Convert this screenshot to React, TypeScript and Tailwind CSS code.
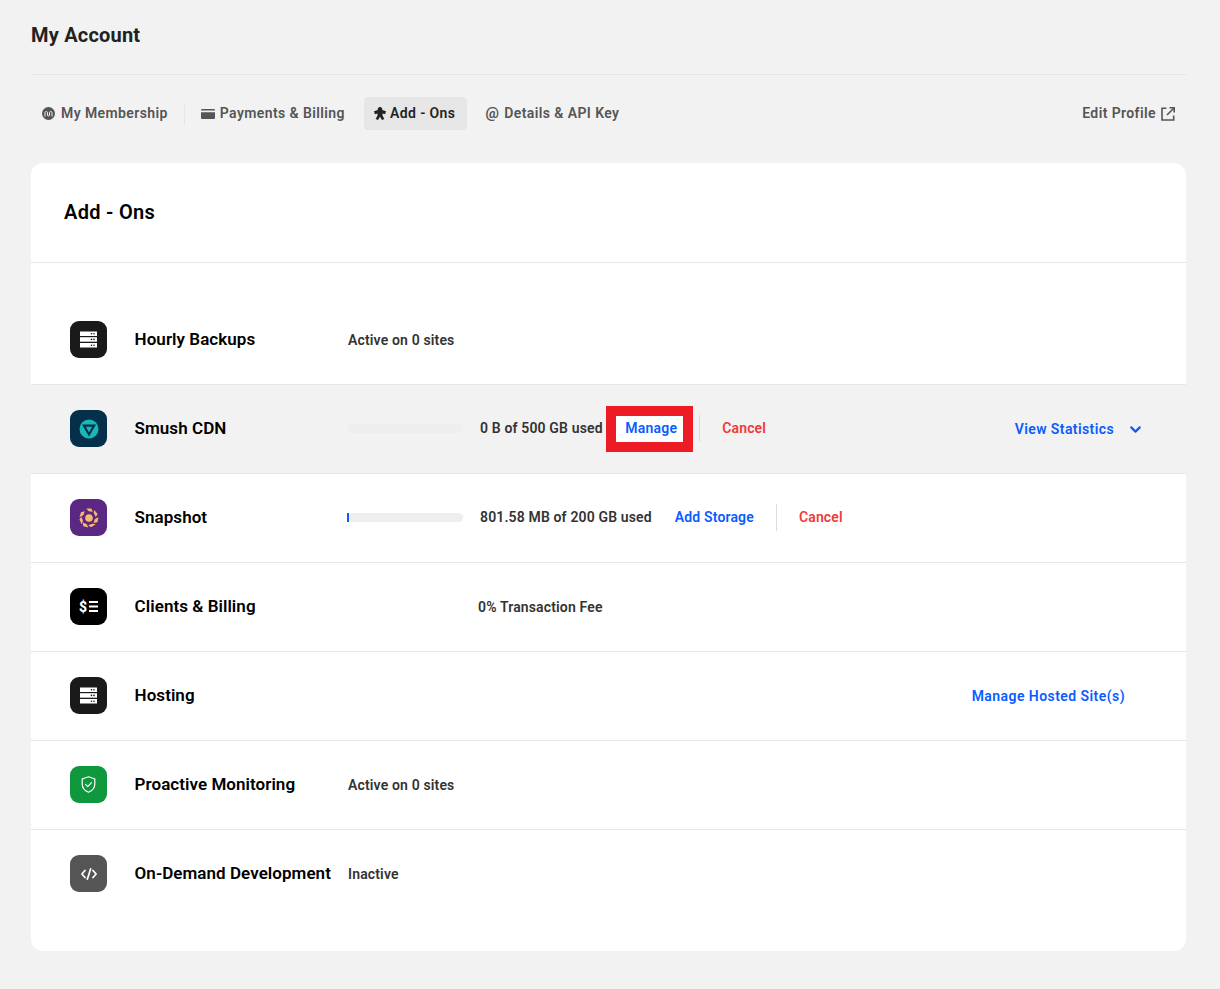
import { ReactNode } from "react";
import { ChevronDown } from "lucide-react";

const font = "[font-family:Roboto,'Liberation_Sans',sans-serif]";

function ServerIcon() {
  return (
    <svg width="17" height="17" viewBox="0 0 17 17">
      <rect x="0" y="0.5" width="17" height="4.5" fill="#fff" />
      <rect x="0" y="6.2" width="17" height="4.5" fill="#fff" />
      <rect x="0" y="12" width="17" height="4.5" fill="#fff" />
      <circle cx="11.5" cy="2.7" r="0.8" fill="#1a1a1a" />
      <circle cx="14" cy="2.7" r="0.8" fill="#1a1a1a" />
      <circle cx="11.5" cy="8.4" r="0.8" fill="#1a1a1a" />
      <circle cx="14" cy="8.4" r="0.8" fill="#1a1a1a" />
      <circle cx="11.5" cy="14.2" r="0.8" fill="#1a1a1a" />
      <circle cx="14" cy="14.2" r="0.8" fill="#1a1a1a" />
    </svg>
  );
}

function SmushIcon() {
  return (
    <svg width="20" height="20" viewBox="0 0 20 20">
      <circle cx="10" cy="10" r="9.5" fill="#17b8b5" />
      <path d="M3 5.500h14L10 17.500z" fill="#04304b" />
      <path d="M6.800 7.800h6.400L10 13.400z" fill="#17b8b5" />
    </svg>
  );
}

function SnapshotIcon() {
  return (
    <svg width="20" height="20" viewBox="0 0 20 20" fill="#f9b96e">
      <circle cx="10" cy="10" r="3.800" />
      <path d="M7.200.6l5-.2 1.800 3.400-4.300-.6z" />
      <path d="M15.200 2l3.400 4-1.700 2.900-2.200-3.800z" />
      <path d="M19.500 9.300l-1.100 5-3.800.8 1.300-4z" />
      <path d="M16.800 16.200l-4.800 3-2.800-2 4.200-1.500z" />
      <path d="M9.400 19.500l-5-1.200-.9-3.700 4 1.300z" />
      <path d="M2.700 16.300L.4 11.600l2-2.900 1.500 4z" />
      <path d="M.5 9.200l1.500-5 3.800-.9-1.400 4z" />
    </svg>
  );
}

function BillingIcon() {
  return (
    <div className="flex items-center gap-[2px] text-white">
      <span className="text-[14px] leading-none font-extrabold">$</span>
      <svg width="9" height="11" viewBox="0 0 9 11" fill="#fff">
        <rect y="0" width="9" height="2" />
        <rect y="4.5" width="9" height="2" />
        <rect y="9" width="9" height="2" />
      </svg>
    </div>
  );
}

function ShieldIcon() {
  return (
    <svg width="15" height="17" viewBox="0 0 15 17" fill="none" stroke="#fff" strokeWidth="1.2">
      <path d="M7.500.8l6.300 2.100v5c0 3.800-2.600 6.800-6.300 8.300C3.800 14.700 1.200 11.700 1.200 7.900v-5z" />
      <path d="M4.600 8.400l2.100 2.200 3.800-4" strokeLinecap="round" strokeLinejoin="round" />
    </svg>
  );
}

function CodeIcon() {
  return (
    <svg width="16" height="12" viewBox="0 0 16 12" fill="none" stroke="#fff" strokeWidth="1.7" strokeLinecap="round" strokeLinejoin="round">
      <path d="M4 2.500L.9 6 4 9.500" />
      <path d="M12 2.500L15.100 6 12 9.500" />
      <path d="M9.600.9L6.400 11.100" />
    </svg>
  );
}

function Row({
  icon,
  iconBg,
  name,
  shaded,
  last,
  usage,
  children,
}: {
  icon: ReactNode;
  iconBg: string;
  name: string;
  shaded?: boolean;
  last?: boolean;
  usage?: boolean;
  children?: ReactNode;
}) {
  return (
    <div
      className={`flex h-[89px] items-center border-b pb-px pl-[39px] ${last ? "border-transparent" : "border-[#e6e6e6]"} ${shaded ? "bg-[#f2f2f2]" : ""}`}
    >
      <div className={`flex h-[37px] w-[37px] shrink-0 items-center justify-center rounded-[9px] ${iconBg}`}>
        {icon}
      </div>
      <div className="ml-[27.6px] w-[213.4px] shrink-0 pb-px text-[17px] leading-5 font-semibold tracking-[0.05px] text-black">
        {name}
      </div>
      <div
        className={`flex min-w-0 flex-1 items-center text-[14px] font-semibold tracking-[0.15px] text-[#333] ${usage ? "" : "pt-[2px]"}`}
      >
        {children}
      </div>
    </div>
  );
}

function Bar({ fill }: { fill?: boolean }) {
  return (
    <div className="relative h-[9px] w-[115px] shrink-0 rounded-full bg-[#eeeeee]">
      {fill ? <div className="absolute top-0 left-[-1px] h-[9px] w-[2px] bg-[#0a5cff]" /> : null}
    </div>
  );
}

export default function App() {
  return (
    <div className={`${font} h-[989px] bg-[#f2f2f2] pr-[34px] pl-[31px]`}>
      <header className="flex h-[75px] items-start border-b border-[#e6e6e6] pt-[23px]">
        <h1 className="text-[20px] leading-6 font-bold tracking-[0.2px] text-[#222]">My Account</h1>
      </header>

      <nav className="mt-[22px] flex h-[33px] items-center text-[14px] font-semibold tracking-[0.4px] text-[#555]">
        <a className="flex items-center gap-[6px] pl-[11px]">
          <svg width="13" height="13" viewBox="0 0 13 13">
            <circle cx="6.500" cy="6.500" r="6.500" fill="#555" />
            <path d="M3 9.500V5.500a1.300 1.300 0 0 1 2.500 0v2.500a1 1 0 0 0 2 0V5.500a1.300 1.300 0 0 1 2.500 0v4" fill="none" stroke="#f2f2f2" strokeWidth="1" />
          </svg>
          My Membership
        </a>
        <span className="mx-4 h-[22px] w-px bg-[#e6e6e6]" />
        <a className="flex items-center gap-[5px]">
          <svg width="14" height="11" viewBox="0 0 14 11" fill="#555">
            <path d="M1 1h12a1 1 0 0 1 1 1v.5H0V2a1 1 0 0 1 1-1z" />
            <path d="M0 4.200h14V10a1 1 0 0 1-1 1H1a1 1 0 0 1-1-1z" />
          </svg>
          Payments &amp; Billing
        </a>
        <a className="ml-[19px] flex h-[33px] items-center gap-[4px] rounded-[4px] bg-[#e6e6e6] pr-[12px] pl-[10px] text-[#222]">
          <svg width="12" height="13" viewBox="0 0 12 13" fill="#222">
            <path d="M6 0a2.300 2.300 0 0 1 2.200 3L12 4.300l-.9 2.900-2.600-.7v1.900L10.300 12l-2.300 1L6 9.800 4 13l-2.300-1 1.800-3.600V6.500l-2.600.7L0 4.300 3.800 3A2.300 2.300 0 0 1 6 0z" />
          </svg>
          Add - Ons
        </a>
        <a className="ml-[18px] flex items-center gap-[5px]">
          <span className="text-[15px] leading-none font-bold">@</span>
          Details &amp; API Key
        </a>
        <a className="mr-[11px] ml-auto flex items-center gap-[5px]">
          Edit Profile
          <svg width="14" height="14" viewBox="0 0 14 14" fill="none" stroke="#555" strokeWidth="1.600">
            <path d="M5.500 1.300H1v11.700h11.700V8.500" />
            <path d="M6 8l7-7" />
            <path d="M8.500.8h4.700v4.700" />
          </svg>
        </a>
      </nav>

      <section className="mt-[33px] h-[788px] overflow-hidden rounded-[12px] bg-white">
        <div className="flex h-[100px] items-center border-b border-[#e6e6e6] pb-[1px] pl-[33px]">
          <h2 className="text-[20px] leading-6 font-semibold tracking-[0.3px] text-black">Add - Ons</h2>
        </div>
        <div className="pt-[33px]">
          <Row icon={<ServerIcon />} iconBg="bg-[#1a1a1a]" name="Hourly Backups">
            Active on 0 sites
          </Row>
          <Row icon={<SmushIcon />} iconBg="bg-[#04304b]" name="Smush CDN" shaded usage>
            <Bar />
            <span className="ml-[17px]">0 B of 500 GB used</span>
            <a className="ml-[3.5px] flex h-[46px] w-[87px] items-center justify-center border-[10px] border-[#ed1c24] bg-white pl-[3px] tracking-[0.25px] text-[#0a5cff]">
              Manage
            </a>
            <span className="ml-[6px] h-[27px] w-px bg-[#dddddd]" />
            <a className="ml-[22px] text-[#f03a3a]">Cancel</a>
            <a className="mt-[2px] ml-auto tracking-[0.4px] text-[#0a5cff]">View Statistics</a>
            <ChevronDown className="mt-[2px] mr-[42px] ml-[13px] text-[#0a5cff]" size={17} strokeWidth={3} />
          </Row>
          <Row icon={<SnapshotIcon />} iconBg="bg-[#5a2782]" name="Snapshot" usage>
            <Bar fill />
            <span className="ml-[17px]">801.58 MB of 200 GB used</span>
            <a className="ml-[23px] text-[#0a5cff]">Add Storage</a>
            <span className="ml-[22px] h-[27px] w-px bg-[#dddddd]" />
            <a className="ml-[22px] text-[#f03a3a]">Cancel</a>
          </Row>
          <Row icon={<BillingIcon />} iconBg="bg-black" name="Clients & Billing">
            <span className="ml-[130px]">0% Transaction Fee</span>
          </Row>
          <Row icon={<ServerIcon />} iconBg="bg-[#1a1a1a]" name="Hosting">
            <a className="mr-[61px] ml-auto tracking-[0.44px] text-[#0a5cff]">Manage Hosted Site(s)</a>
          </Row>
          <Row icon={<ShieldIcon />} iconBg="bg-[#0f973d]" name="Proactive Monitoring">
            Active on 0 sites
          </Row>
          <Row icon={<CodeIcon />} iconBg="bg-[#555555]" name="On-Demand Development" last>
            Inactive
          </Row>
        </div>
      </section>
    </div>
  );
}
